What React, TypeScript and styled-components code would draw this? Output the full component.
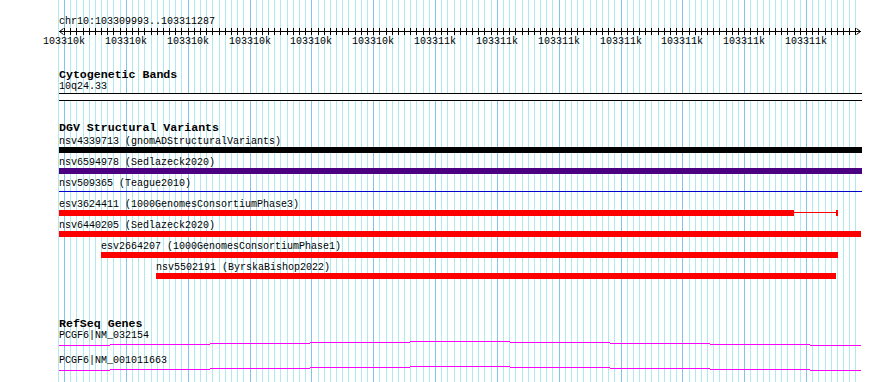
import React from "react";
import styled, { createGlobalStyle } from "styled-components";

/* ---------- view geometry (pixels on the 890px canvas) ---------- */
const LANE_X = 59;
const LANE_W = 803;
const FIRST_MAJOR = 64; // x of 103,310,000
const MINOR_STEP = (806 - 64) / 120; // 10 bp
const MINOR_COUNT = 128;

const minorXs = Array.from({ length: MINOR_COUNT + 2 }, (_, i) => i - 1).map((j) => ({
  x: Math.round(FIRST_MAJOR + MINOR_STEP * j),
  major: j % 10 === 0,
}));

const majorLabels = Array.from({ length: 13 }, (_, k) => ({
  x: Math.round(FIRST_MAJOR + MINOR_STEP * 10 * k),
  text: k < 6 ? "103310k" : "103311k",
}));

type Feature = {
  name: string;
  source: string;
  start: number; // px from lane start
  end: number;
  color: string;
  thin?: boolean;
  thickEnd?: number;
};

const variants: Feature[] = [
  { name: "nsv4339713", source: "gnomADStructuralVariants", start: 0, end: 803, color: "#000000" },
  { name: "nsv6594978", source: "Sedlazeck2020", start: 0, end: 803, color: "#4b0082" },
  { name: "nsv509365", source: "Teague2010", start: 0, end: 803, color: "#0000cd", thin: true },
  { name: "esv3624411", source: "1000GenomesConsortiumPhase3", start: 0, end: 779, color: "#ff0000", thickEnd: 735 },
  { name: "nsv6440205", source: "Sedlazeck2020", start: 0, end: 802, color: "#ff0000" },
  { name: "esv2664207", source: "1000GenomesConsortiumPhase1", start: 42, end: 779, color: "#ff0000" },
  { name: "nsv5502191", source: "ByrskaBishop2022", start: 97, end: 777, color: "#ff0000" },
];

const genes = ["PCGF6|NM_032154", "PCGF6|NM_001011663"];

/* intron "hat" line, aliased into 1px steps */
const hatSteps: [number, number, number][] = [
  [59, 110, 4],
  [110, 210, 3],
  [210, 310, 2],
  [310, 410, 1],
  [410, 510, 0],
  [510, 610, 1],
  [610, 710, 2],
  [710, 810, 3],
  [810, 861, 4],
];

/* ---------- styles ---------- */
const GlobalStyle = createGlobalStyle`
  html, body { margin: 0; padding: 0; background: #ffffff; }
  #root { width: 890px; height: 382px; }
`;

const Stage = styled.div`
  display: grid;
  width: 890px;
  height: 382px;
  overflow: hidden;
  background: #ffffff;
  & > * {
    grid-area: 1 / 1;
  }
`;

const GridLayer = styled.svg`
  display: block;
  width: 890px;
  height: 382px;
`;

const Tracks = styled.div`
  display: flex;
  flex-direction: column;
  align-self: start;
  width: ${LANE_W}px;
  padding: 16px 0 0 ${LANE_X}px;
  font-family: "Liberation Mono", "DejaVu Sans Mono", monospace;
  font-size: 10px;
  color: #000000;
`;

const Ruler = styled.section`
  display: flex;
  flex-direction: column;
`;

const LocusLabel = styled.div`
  height: 12px;
  line-height: 12px;
  white-space: nowrap;
`;

const AxisSvg = styled.svg`
  display: block;
  width: ${LANE_W}px;
  height: 20px;
  overflow: visible;
  font-family: "Liberation Mono", "DejaVu Sans Mono", monospace;
  font-size: 10px;
`;

const Track = styled.section<{ $gap: number }>`
  display: flex;
  flex-direction: column;
  margin-top: ${(p) => p.$gap}px;
`;

const TrackTitle = styled.h2`
  margin: 0;
  height: 13px;
  font: bold 11.6px/13px "Liberation Mono", "DejaVu Sans Mono", monospace;
  white-space: nowrap;
`;

const BandLabel = styled.div`
  height: 12px;
  line-height: 12px;
  white-space: nowrap;
`;

const BandBox = styled.div`
  box-sizing: border-box;
  width: ${LANE_W}px;
  height: 8px;
  border-top: 1px solid #000000;
  border-bottom: 1px solid #000000;
  background: #ffffff;
`;

const FeatureList = styled.div`
  display: flex;
  flex-direction: column;
  margin-top: 2px;
`;

const FeatureRow = styled.div<{ $offset: number }>`
  display: flex;
  flex-direction: column;
  margin-bottom: 4px;
  padding-left: ${(p) => p.$offset}px;
`;

const FeatureLabel = styled.div`
  height: 11px;
  line-height: 11px;
  white-space: nowrap;
`;

const BarGroup = styled.div<{ $width: number }>`
  display: flex;
  width: ${(p) => p.$width}px;
  height: 6px;
`;

const ThickBar = styled.div<{ $color: string; $width?: number }>`
  height: 6px;
  flex: ${(p) => (p.$width ? `0 0 ${p.$width}px` : "1 1 auto")};
  background: ${(p) => p.$color};
`;

const ThinBar = styled.div<{ $color: string }>`
  flex: 1 1 auto;
  height: 1px;
  margin-top: 2px;
  background: ${(p) => p.$color};
`;

const EndCap = styled.div<{ $color: string }>`
  flex: 0 0 2px;
  height: 6px;
  background: ${(p) => p.$color};
`;

const GeneRow = styled.div`
  display: flex;
  flex-direction: column;
`;

const GeneLabel = styled.div`
  height: 11px;
  line-height: 11px;
  white-space: nowrap;
`;

const GeneSvg = styled.svg`
  display: block;
  width: ${LANE_W}px;
  height: 14px;
`;

/* ---------- components ---------- */
const Grid = () => (
  <GridLayer viewBox="0 0 890 382" shapeRendering="crispEdges" aria-hidden>
    {minorXs.map((l) => (
      <rect key={l.x} x={l.x} y={0} width={1} height={382} fill={l.major ? "#82c4ea" : "#aeeaee"} />
    ))}
  </GridLayer>
);

const Axis = () => (
  <AxisSvg viewBox={`0 0 ${LANE_W} 20`}>
    <g shapeRendering="crispEdges">
      <rect x={0} y={3} width={802} height={1} fill="#000" />
      {minorXs
        .filter((l) => l.x > LANE_X + 3 && l.x < LANE_X + 798)
        .map((l) => (
          <rect key={l.x} x={l.x - LANE_X} y={0} width={1} height={7} fill="#000" />
        ))}
    </g>
    <polyline points="4.5,0.5 0.5,3.5 4.5,6.5" fill="none" stroke="#000" strokeWidth={1} />
    <polyline points="797.5,0.5 801.5,3.5 797.5,6.5" fill="none" stroke="#000" strokeWidth={1} />
    {majorLabels.map((m, i) => (
      <text key={i} x={m.x - LANE_X} y={16} textAnchor="middle" fill="#000">
        {m.text}
      </text>
    ))}
  </AxisSvg>
);

const VariantBar = ({ f }: { f: Feature }) => {
  const width = f.end - f.start;
  if (f.thin) {
    return (
      <BarGroup $width={width}>
        <ThinBar $color={f.color} />
      </BarGroup>
    );
  }
  if (f.thickEnd) {
    return (
      <BarGroup $width={width}>
        <ThickBar $color={f.color} $width={f.thickEnd - f.start} />
        <ThinBar $color={f.color} />
        <EndCap $color={f.color} />
      </BarGroup>
    );
  }
  return (
    <BarGroup $width={width}>
      <ThickBar $color={f.color} />
    </BarGroup>
  );
};

const GeneModel = () => (
  <GeneSvg viewBox={`0 0 ${LANE_W} 14`} shapeRendering="crispEdges">
    {hatSteps.map(([a, b, y]) => (
      <rect key={a} x={a - LANE_X} y={y} width={b - a} height={1} fill="#ff00ff" />
    ))}
  </GeneSvg>
);

export default function App() {
  return (
    <>
      <GlobalStyle />
      <Stage>
        <Grid />
        <Tracks>
          <Ruler>
            <LocusLabel>chr10:103309993..103311287</LocusLabel>
            <Axis />
          </Ruler>

          <Track $gap={20}>
            <TrackTitle>Cytogenetic Bands</TrackTitle>
            <BandLabel>10q24.33</BandLabel>
            <BandBox />
          </Track>

          <Track $gap={20}>
            <TrackTitle>DGV Structural Variants</TrackTitle>
            <FeatureList>
              {variants.map((f) => (
                <FeatureRow key={f.name} $offset={f.start}>
                  <FeatureLabel>
                    {f.name} ({f.source})
                  </FeatureLabel>
                  <VariantBar f={f} />
                </FeatureRow>
              ))}
            </FeatureList>
          </Track>

          <Track $gap={34}>
            <TrackTitle>RefSeq Genes</TrackTitle>
            {genes.map((g) => (
              <GeneRow key={g}>
                <GeneLabel>{g}</GeneLabel>
                <GeneModel />
              </GeneRow>
            ))}
          </Track>
        </Tracks>
      </Stage>
    </>
  );
}
